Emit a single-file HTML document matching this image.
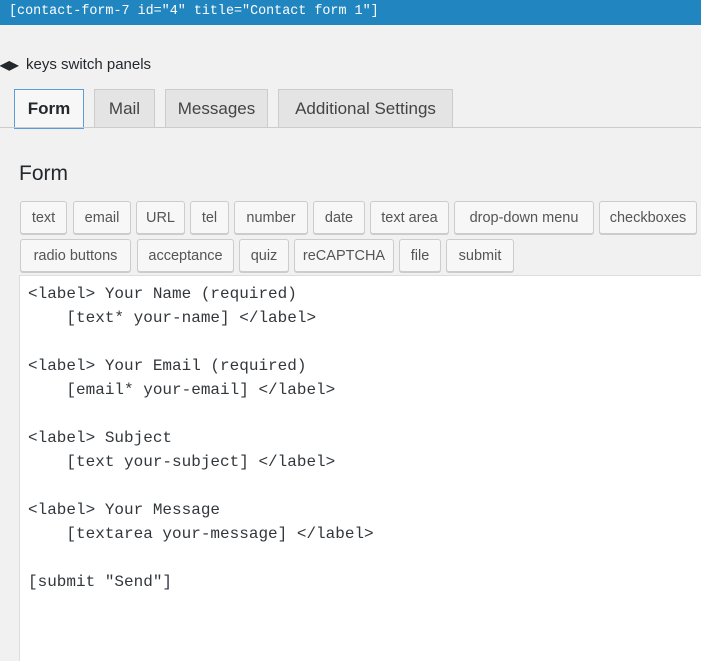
<!DOCTYPE html>
<html style="width:701px;height:661px;overflow:hidden"><head><meta charset="utf-8"><style>
*{margin:0;padding:0;box-sizing:border-box}
body{width:701px;height:661px;overflow:hidden;background:#f1f1f1;font-family:"Liberation Sans",sans-serif;color:#23282d;position:relative}
.hdr{position:absolute;left:0;top:0;width:701px;height:25px;background:#2186c0;color:#fff;font-family:"Liberation Mono",monospace;font-size:13.4px;line-height:24px;padding-left:9px}
.keys{position:absolute;left:0;top:56px;font-size:15px}
.keys span{position:absolute;left:26px;top:0;white-space:nowrap}
.tab{position:absolute;top:89px;height:39px;border:1px solid #ccc;border-bottom:none;background:#e4e4e4;font-size:17px;line-height:38px;text-align:center;color:#444}
.tab.a{background:#f7f7f7;border:1px solid #5b9dd9;font-weight:bold;color:#23282d;height:40px}
.line{position:absolute;left:0;top:127px;width:701px;height:1px;background:#ccc}
h2{position:absolute;left:19px;top:162px;font-weight:normal;font-size:21px;color:#23282d}
.b{position:absolute;height:33px;border:1px solid #ccc;border-radius:3px;background:#f7f7f7;box-shadow:0 1px 0 #ccc;font-size:14.5px;line-height:32px;text-align:center;color:#555}
.ta{position:absolute;left:19px;top:275px;width:682px;height:386px;background:#fff;border:1px solid #ddd;border-bottom:none;border-right:none;font-family:"Liberation Mono",monospace;font-size:16px;line-height:24px;padding:6px 8px;white-space:pre;color:#32373c;overflow:hidden}
</style></head><body>
<div class="hdr">[contact-form-7 id="4" title="Contact form 1"]</div>
<div class="keys"><b style="font-size:12px">◀▶</b><span>keys switch panels</span></div>
<div class="tab a" style="left:14px;width:70px">Form</div>
<div class="tab" style="left:94px;width:61px">Mail</div>
<div class="tab" style="left:165px;width:103px">Messages</div>
<div class="tab" style="left:278px;width:175px">Additional Settings</div>
<div class="line"></div>
<h2>Form</h2>
<div class="b" style="top:201px;left:20px;width:47px">text</div>
<div class="b" style="top:201px;left:73px;width:58px">email</div>
<div class="b" style="top:201px;left:136px;width:49px">URL</div>
<div class="b" style="top:201px;left:190px;width:39px">tel</div>
<div class="b" style="top:201px;left:234px;width:74px">number</div>
<div class="b" style="top:201px;left:313px;width:52px">date</div>
<div class="b" style="top:201px;left:370px;width:79px">text area</div>
<div class="b" style="top:201px;left:454px;width:140px">drop-down menu</div>
<div class="b" style="top:201px;left:599px;width:98px">checkboxes</div>
<div class="b" style="top:239px;left:20px;width:111px">radio buttons</div>
<div class="b" style="top:239px;left:137px;width:97px">acceptance</div>
<div class="b" style="top:239px;left:239px;width:50px">quiz</div>
<div class="b" style="top:239px;left:294px;width:100px">reCAPTCHA</div>
<div class="b" style="top:239px;left:399px;width:42px">file</div>
<div class="b" style="top:239px;left:446px;width:68px">submit</div>
<div class="ta">&lt;label&gt; Your Name (required)
    [text* your-name] &lt;/label&gt;

&lt;label&gt; Your Email (required)
    [email* your-email] &lt;/label&gt;

&lt;label&gt; Subject
    [text your-subject] &lt;/label&gt;

&lt;label&gt; Your Message
    [textarea your-message] &lt;/label&gt;

[submit "Send"]</div>
</body></html>
